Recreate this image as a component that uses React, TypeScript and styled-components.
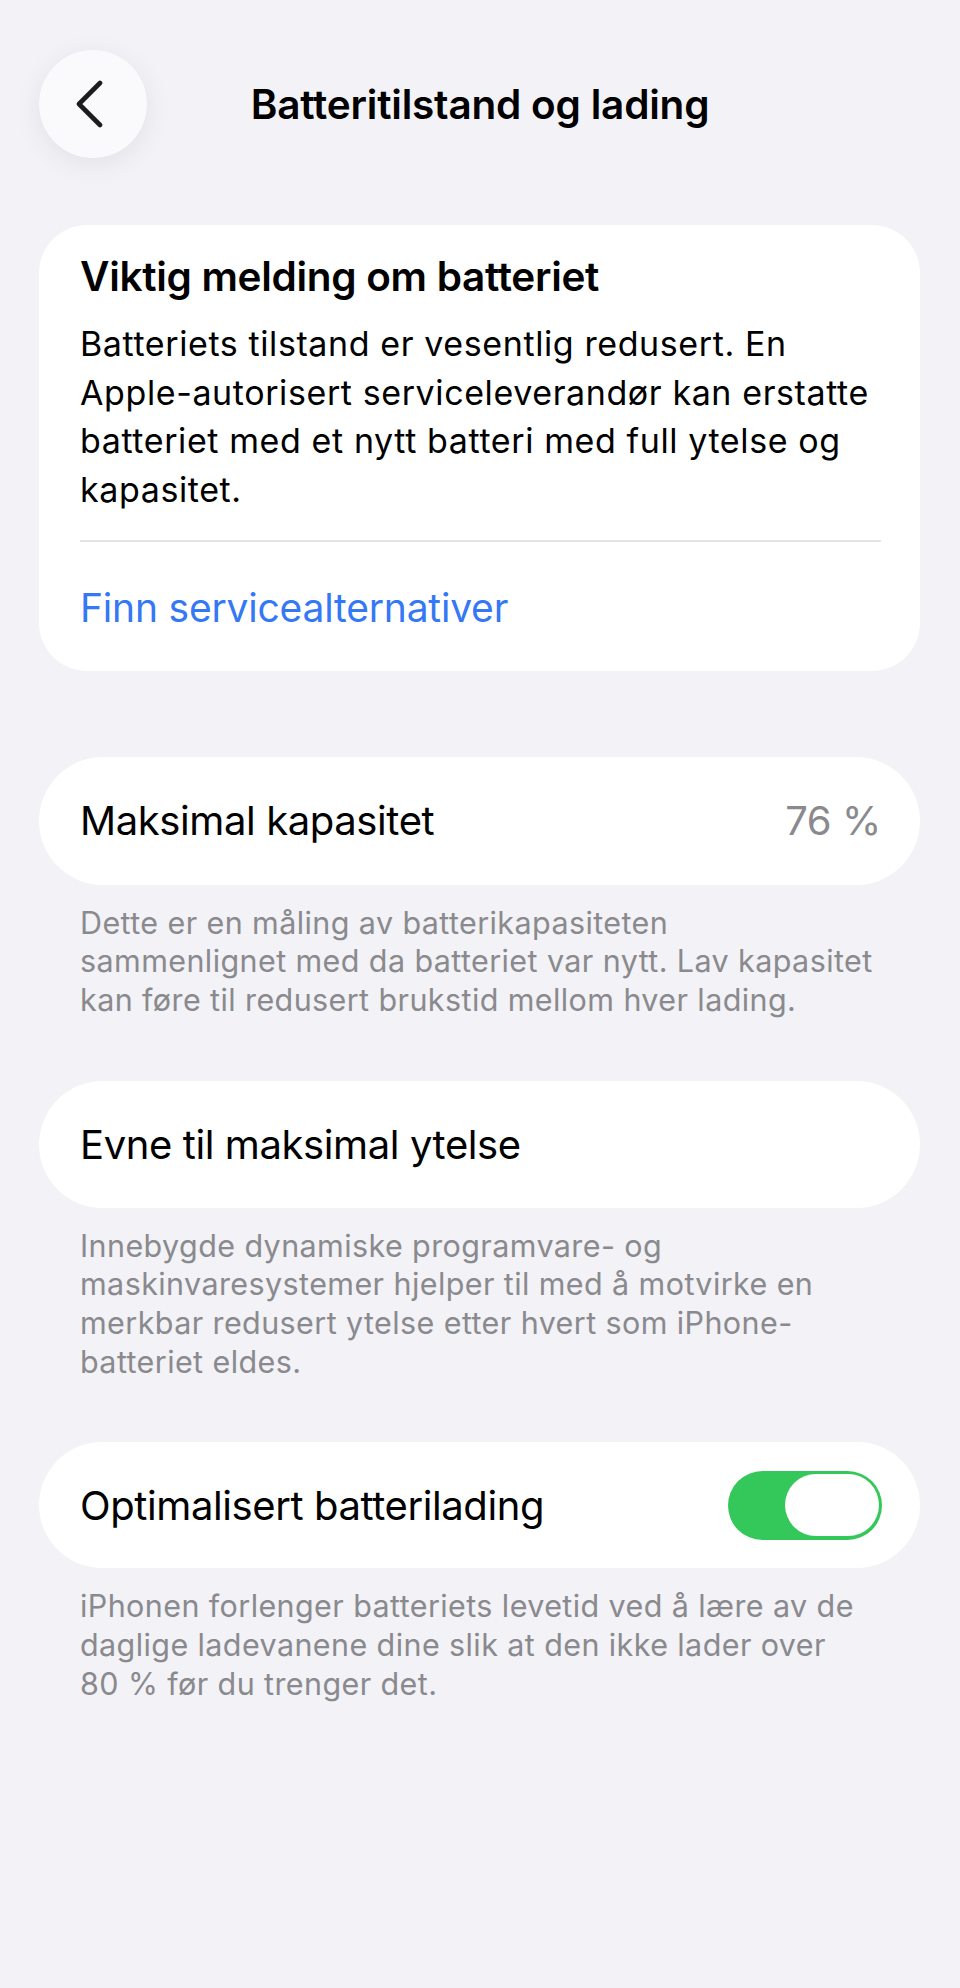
import React from "react";
import styled, { createGlobalStyle } from "styled-components";

const Global = createGlobalStyle`
  html, body { margin: 0; padding: 0; background: #F2F2F7; }
  body { font-family: Inter, "Noto Sans", sans-serif; -webkit-font-smoothing: antialiased; }
  * { box-sizing: border-box; }
`;

const Page = styled.div`
  min-height: 1988px;
  background: #F2F2F7;
  padding: 50px 40px 0 39px;
  color: #000;
`;

const Header = styled.header`
  display: grid;
  grid-template-columns: 108px 1fr 108px;
  align-items: center;
  height: 108px;
  margin-right: -1px;
`;

const BackButton = styled.button`
  width: 108px;
  height: 108px;
  border-radius: 50%;
  border: none;
  background: #FAFAFC;
  box-shadow: 0 6px 28px rgba(0, 0, 0, 0.07);
  display: flex;
  align-items: center;
  justify-content: center;
  padding: 0 7px 0 0;
  cursor: pointer;
`;

const Title = styled.h1`
  margin: 0;
  text-align: center;
  font-size: 40.5px;
  font-weight: 600;
  letter-spacing: -0.2px;
  color: #000;
`;

const Card = styled.section<{ $mt: number }>`
  background: #fff;
  border-radius: 48px;
  margin-top: ${(p) => p.$mt}px;
  padding: 30px 39px 38px 41px;
`;

const Heading = styled.h2`
  margin: 0;
  font-size: 40.5px;
  line-height: 44px;
  font-weight: 600;
  letter-spacing: -0.3px;
`;

const Body = styled.p`
  margin: 21px 0 0;
  font-size: 34px;
  line-height: 48.5px;
  font-weight: 400;
  letter-spacing: 0.6px;
`;

const Separator = styled.hr`
  margin: 26px 0 0;
  border: none;
  height: 2px;
  background: #E4E4E8;
`;

const Link = styled.a`
  display: block;
  margin-top: 42px;
  font-size: 39px;
  line-height: 48.5px;
  color: #3478F6;
  text-decoration: none;
  letter-spacing: -0.2px;
`;

const Row = styled.div<{ $mt: number; $h: number }>`
  background: #fff;
  border-radius: 64px;
  height: ${(p) => p.$h}px;
  margin-top: ${(p) => p.$mt}px;
  display: flex;
  align-items: center;
  justify-content: space-between;
  padding: 0 39px 0 41px;
`;

const RowLabel = styled.span`
  font-size: 40px;
  font-weight: 400;
  letter-spacing: -0.4px;
`;

const RowValue = styled.span`
  font-size: 40px;
  color: #8A8A8E;
  letter-spacing: -0.4px;
`;

const Caption = styled.p`
  margin: 19px 0 0;
  padding: 0 41px;
  font-size: 30.5px;
  line-height: 38.7px;
  color: #8A8A8E;
  letter-spacing: 0.4px;
`;

const Toggle = styled.div<{ $on: boolean }>`
  width: 154px;
  height: 69px;
  border-radius: 35px;
  background: ${(p) => (p.$on ? "#34C759" : "#E9E9EA")};
  display: flex;
  align-items: center;
  justify-content: ${(p) => (p.$on ? "flex-end" : "flex-start")};
  padding: 0 3px;
  margin-right: -1px;
`;

const Knob = styled.div`
  width: 94px;
  height: 62px;
  border-radius: 31px;
  background: #fff;
`;

const Chevron = () => (
  <svg width="30" height="48" viewBox="0 0 30 48" fill="none">
    <path
      d="M25 3 L4 24 L25 45"
      stroke="#1C1C1E"
      strokeWidth="4.6"
      strokeLinecap="round"
      strokeLinejoin="round"
    />
  </svg>
);

export default function App() {
  return (
    <>
      <Global />
      <Page>
        <Header>
          <BackButton aria-label="Tilbake">
            <Chevron />
          </BackButton>
          <Title>Batteritilstand og lading</Title>
          <span />
        </Header>

        <Card $mt={67}>
          <Heading>Viktig melding om batteriet</Heading>
          <Body>
            Batteriets tilstand er vesentlig redusert. En
            <br />
            Apple-autorisert serviceleverandør kan erstatte
            <br />
            batteriet med et nytt batteri med full ytelse og
            <br />
            kapasitet.
          </Body>
          <Separator />
          <Link href="#">Finn servicealternativer</Link>
        </Card>

        <Row $mt={86} $h={128}>
          <RowLabel>Maksimal kapasitet</RowLabel>
          <RowValue>76 %</RowValue>
        </Row>
        <Caption>
          Dette er en måling av batterikapasiteten
          <br />
          sammenlignet med da batteriet var nytt. Lav kapasitet
          <br />
          kan føre til redusert brukstid mellom hver lading.
        </Caption>

        <Row $mt={61} $h={127}>
          <RowLabel>Evne til maksimal ytelse</RowLabel>
        </Row>
        <Caption>
          Innebygde dynamiske programvare- og
          <br />
          maskinvaresystemer hjelper til med å motvirke en
          <br />
          merkbar redusert ytelse etter hvert som iPhone-
          <br />
          batteriet eldes.
        </Caption>

        <Row $mt={61} $h={126}>
          <RowLabel>Optimalisert batterilading</RowLabel>
          <Toggle $on>
            <Knob />
          </Toggle>
        </Row>
        <Caption>
          iPhonen forlenger batteriets levetid ved å lære av de
          <br />
          daglige ladevanene dine slik at den ikke lader over
          <br />
          80 % før du trenger det.
        </Caption>
      </Page>
    </>
  );
}
